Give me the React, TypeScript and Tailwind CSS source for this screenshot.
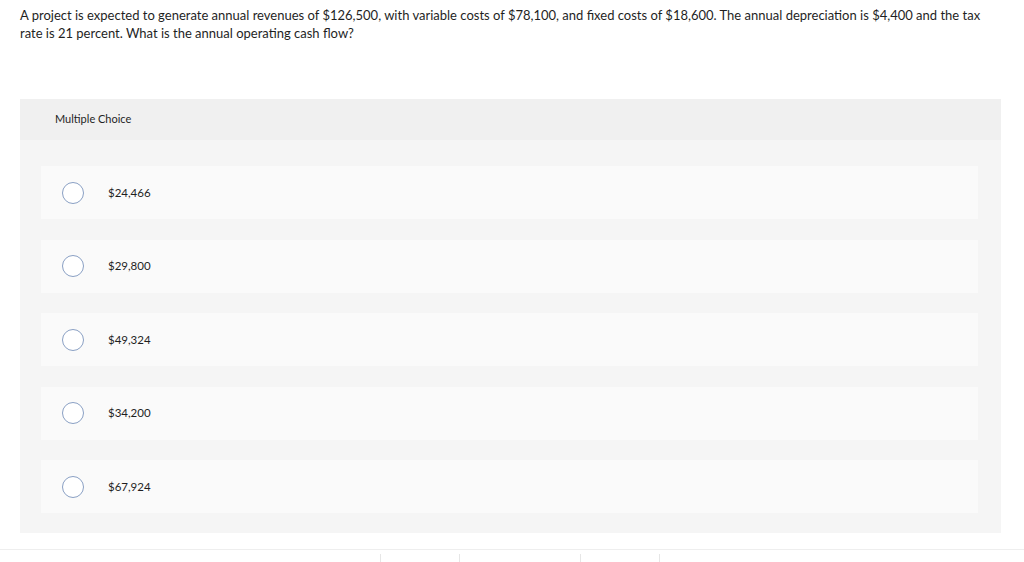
import React from 'react';

const options = ['$24,466', '$29,800', '$49,324', '$34,200', '$67,924'];

const App: React.FC = () => {
  return (
    <div className="w-[1024px] h-[562px] bg-white overflow-hidden text-[#1f1f1f]" style={{ fontFamily: 'Lato, "Open Sans", sans-serif' }}>
      <div className="px-5 pt-[6px]">
        <p className="text-[13px] leading-[18px] w-[970px]">
          A project is expected to generate annual revenues of $126,500, with variable costs of $78,100, and fixed costs of $18,600. The annual depreciation is $4,400 and the tax rate is 21 percent. What is the annual operating cash flow?
        </p>
      </div>

      <div className="mt-[57px] ml-5 w-[981px] bg-[#f5f5f5]">
        <div className="h-[41px] bg-[#f0f0f0] flex items-center pl-[35px]">
          <span className="text-[11px]">Multiple Choice</span>
        </div>
        <div className="flex flex-col gap-[20.5px] pl-[21px] pr-[23px] pt-[26px] pb-[20px]">
          {options.map((o) => (
            <div key={o} className="h-[53px] bg-[#fafafa] flex items-center">
              <span className="ml-[21px] w-[22px] h-[22px] rounded-full border border-[#8aa0c4] bg-white shrink-0" />
              <span className="ml-[24px] text-[11.5px]">{o}</span>
            </div>
          ))}
        </div>
      </div>

      <div className="mt-4 border-t border-[#eeeeee] h-[13px] flex">
        <div className="ml-[380px] mt-[4px] w-px h-[9px] bg-[#e6e6e6]" />
        <div className="ml-[78px] mt-[4px] w-px h-[9px] bg-[#e6e6e6]" />
        <div className="ml-[120px] mt-[4px] w-px h-[9px] bg-[#e6e6e6]" />
        <div className="ml-[78px] mt-[4px] w-px h-[9px] bg-[#e6e6e6]" />
      </div>
    </div>
  );
};

export default App;
